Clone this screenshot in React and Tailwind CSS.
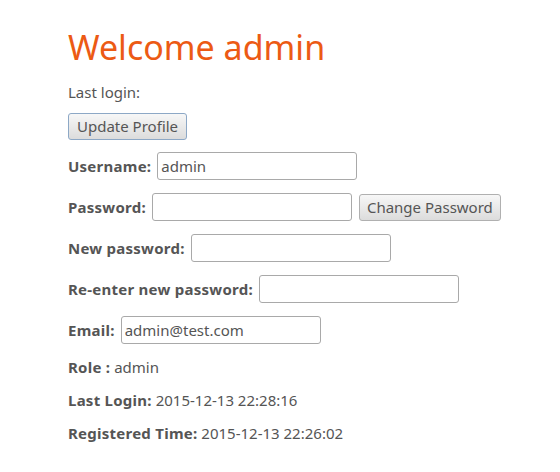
import React from 'react';

const Field = ({ label, value = '', type = 'text', children }) => (
    <div className="flex items-center gap-[6px] h-[28px]">
        <label className="font-bold tracking-[0.25px]">{label}</label>
        <input
            type={type}
            defaultValue={value}
            className="w-[200px] h-[28px] px-[3px] border border-[#a9a9a9] rounded-[3px] bg-white text-[#555] outline-none"
        />
        {children}
    </div>
);

const Info = ({ label, value }) => (
    <div className="h-[20px] leading-[20px]">
        <span className="font-bold tracking-[0.25px]">{label}</span> {value}
    </div>
);

const App = () => {
    return (
        <div className="min-h-[472px] bg-white text-[15px] text-[#555] font-['Noto_Sans',sans-serif] pl-[68px]">
            <h1 className="pt-[27px] text-[34px] leading-[40px] text-[#ec5a14]">Welcome admin</h1>
            <p className="mt-[15px] leading-[20px]">Last login:</p>
            <button className="mt-[11px] h-[27px] px-[8px] border border-[#8da8c6] rounded-[3px] bg-gradient-to-b from-[#f7f7f7] to-[#dcdcdc] text-[#555]">
                Update Profile
            </button>
            <div className="mt-[12px] flex flex-col gap-[13px]">
                <Field label="Username:" value="admin" />
                <Field label="Password:" type="password">
                    <button className="ml-[1px] h-[27px] px-[7px] border border-[#b0b0b0] rounded-[3px] bg-gradient-to-b from-[#f7f7f7] to-[#dcdcdc] text-[#555]">
                        Change Password
                    </button>
                </Field>
                <Field label="New password:" type="password" />
                <Field label="Re-enter new password:" type="password" />
                <Field label="Email:" value="admin@test.com" />
                <Info label="Role :" value="admin" />
                <Info label="Last Login:" value="2015-12-13 22:28:16" />
                <Info label="Registered Time:" value="2015-12-13 22:26:02" />
            </div>
        </div>
    );
};

export default App;
